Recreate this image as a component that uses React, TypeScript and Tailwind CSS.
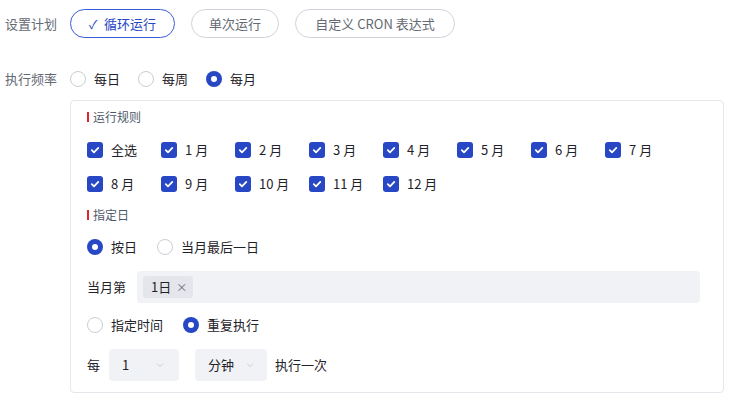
import React from "react"

const months = ["全选", "1 月", "2 月", "3 月", "4 月", "5 月", "6 月", "7 月", "8 月", "9 月", "10 月", "11 月", "12 月"]

function Check() {
  return (
    <span className="flex h-4 w-4 items-center justify-center rounded-[3px] bg-[#2747c4]">
      <svg width="10" height="10" viewBox="0 0 10 10" fill="none">
        <path d="M1.8 5.2 4 7.3 8.3 2.9" stroke="#fff" strokeWidth="1.8" strokeLinecap="round" strokeLinejoin="round" />
      </svg>
    </span>
  )
}

function Radio({ on, label }: { on?: boolean; label: string }) {
  return (
    <div className="flex items-center gap-2">
      {on ? (
        <span className="flex h-4 w-4 items-center justify-center rounded-full bg-[#2747c4]">
          <span className="h-[6px] w-[6px] rounded-full bg-white" />
        </span>
      ) : (
        <span className="h-4 w-4 rounded-full border border-[#c9cdd4] bg-white" />
      )}
      <span className="text-[13px] text-[#1f2329]">{label}</span>
    </div>
  )
}

function Heading({ text }: { text: string }) {
  return (
    <div className="flex h-4 items-center gap-1">
      <span className="h-[10px] w-[2px] bg-[#e0262b]" />
      <span className="text-[12px] text-[#4e5969]">{text}</span>
    </div>
  )
}

function Chevron() {
  return (
    <svg width="10" height="10" viewBox="0 0 10 10" fill="none">
      <path d="M2.5 4 5 6.5 7.5 4" stroke="#c9cdd4" strokeWidth="1" strokeLinecap="round" strokeLinejoin="round" />
    </svg>
  )
}

export default function App() {
  return (
    <div
      className="min-h-[402px] w-[731px] bg-white pl-[5px] pt-[9px]"
      style={{ fontFamily: '"Noto Sans CJK SC", "Noto Sans", sans-serif' }}
    >
      {/* 设置计划 */}
      <div className="flex items-center">
        <span className="w-[65px] text-[13px] text-[#646a73]">设置计划</span>
        <div className="flex gap-4">
          <button className="flex h-[29px] w-[105px] items-center justify-center gap-[7px] rounded-full border border-[#3a5bd9] text-[13px] text-[#2747c4]">
            <span className="text-[12px]">✓</span>
            循环运行
          </button>
          <button className="h-[29px] w-[88px] rounded-full border border-[#d0d3d9] text-[13px] text-[#646a73]">单次运行</button>
          <button className="h-[29px] w-[160px] rounded-full border border-[#d0d3d9] text-[13px] text-[#646a73]">自定义 CRON 表达式</button>
        </div>
      </div>

      {/* 执行频率 */}
      <div className="mt-[31px] flex h-5 items-center">
        <span className="w-[65px] text-[13px] text-[#646a73]">执行频率</span>
        <div className="flex gap-[18px]">
          <Radio label="每日" />
          <Radio label="每周" />
          <Radio on label="每月" />
        </div>
      </div>

      {/* 配置卡片 */}
      <div className="ml-[65px] mt-[11px] w-[654px] rounded-[4px] border border-[#e5e6eb] pb-[11px] pl-4 pr-[23px] pt-2">
        <Heading text="运行规则" />
        <div className="mt-[15px] grid grid-cols-[repeat(8,74px)] gap-y-[14px]">
          {months.map((m) => (
            <div key={m} className="flex h-5 items-center gap-2">
              <Check />
              <span className="text-[13px] text-[#1f2329]">{m}</span>
            </div>
          ))}
        </div>

        <div className="mt-[13px]">
          <Heading text="指定日" />
        </div>
        <div className="mt-[14px] flex h-5 items-center gap-[20px]">
          <Radio on label="按日" />
          <Radio label="当月最后一日" />
        </div>

        <div className="mt-[14px] flex items-center gap-[11px]">
          <span className="text-[13px] text-[#1f2329]">当月第</span>
          <div className="flex h-8 flex-1 items-center rounded-[4px] bg-[#f1f2f5] px-[6px]">
            <span className="flex h-[22px] items-center gap-[5px] rounded-[3px] bg-[#e4e6eb] pl-2 pr-[6px] text-[13px] text-[#1f2329]">
              1日
              <span className="text-[11px] text-[#646a73]">×</span>
            </span>
          </div>
        </div>

        <div className="mt-3 flex h-5 items-center gap-[20px]">
          <Radio label="指定时间" />
          <Radio on label="重复执行" />
        </div>

        <div className="mt-[14px] flex items-center text-[13px] text-[#1f2329]">
          <span className="w-[22px]">每</span>
          <div className="flex h-8 w-[70px] items-center justify-between rounded-[4px] bg-[#f1f2f5] pl-[13px] pr-[14px]">
            <span>1</span>
            <Chevron />
          </div>
          <div className="ml-4 flex h-8 w-[72px] items-center justify-between rounded-[4px] bg-[#f1f2f5] pl-[13px] pr-[12px]">
            <span>分钟</span>
            <Chevron />
          </div>
          <span className="ml-2">执行一次</span>
        </div>
      </div>
    </div>
  )
}
